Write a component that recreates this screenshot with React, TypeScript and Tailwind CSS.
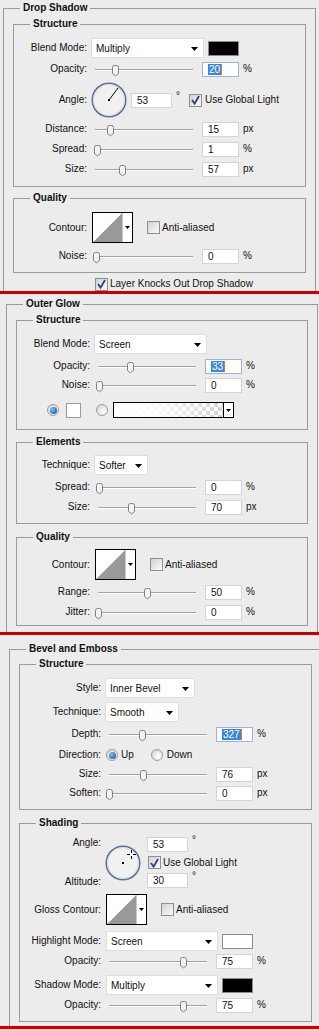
import React from 'react';

// Photoshop "Layer Style" panels: Drop Shadow / Outer Glow / Bevel and Emboss

function Arrow({ small }: { small?: boolean }) {
  return small ? (
    <svg width="5" height="3" viewBox="0 0 5 3" className="shrink-0">
      <path d="M0 0H5L2.5 3Z" fill="#000" />
    </svg>
  ) : (
    <svg width="7" height="4" viewBox="0 0 7 4" className="shrink-0">
      <path d="M0 0H7L3.5 4Z" fill="#000" />
    </svg>
  );
}

function Group({ title, className = '', children }: { title: string; className?: string; children: React.ReactNode }) {
  return (
    <fieldset className={`border border-[#9a9a9a] ${className}`}>
      <legend className="ml-[16px] px-[3px] text-[10px] leading-[12px] font-bold text-[#111]">{title}</legend>
      {children}
    </fieldset>
  );
}

function Slider({ at }: { at: number }) {
  // at = thumb offset from the start of the track
  return (
    <div className="relative h-[16px] w-[106px] shrink-0">
      <div className="absolute left-[4px] right-[4px] top-[8px] h-[2px] border-t border-[#a3a3a3] bg-white" />
      <svg width="9" height="13" viewBox="0 0 9 13" className="absolute top-[3px]" style={{ left: at }}>
        <path d="M1.5 3.5Q1.5 1.5 3.5 1.5H5.5Q7.5 1.5 7.5 3.5V9.5L4.5 11.8L1.5 9.5Z" fill="#f2f2f2" stroke="#7f7f7f" />
        <path d="M2.5 3.5V9" stroke="#fff" />
      </svg>
    </div>
  );
}

function Field({ value, selected, wide }: { value: string; selected?: boolean; wide?: boolean }) {
  return (
    <div
      className={`${wide ? 'w-[41px]' : 'w-[37px]'} h-[15px] shrink-0 bg-white border ${
        selected ? 'border-[#9fb3d6]' : 'border-[#d4d4d4]'
      } flex items-center pl-[5px] leading-[11px]`}
    >
      {selected ? (
        <>
          <span className="bg-[#3b86e0] text-white px-[1px]">{value}</span>
          <span className="w-[1px] h-[11px] bg-[#e07a2a]" />
        </>
      ) : (
        value
      )}
    </div>
  );
}

function Degree({ value }: { value: string }) {
  return (
    <div className="flex items-start">
      <Field value={value} wide />
      <span className="ml-[4px] -mt-[3px]">°</span>
    </div>
  );
}

function Select({ value, w }: { value: string; w: string }) {
  return (
    <div className={`${w} h-[20px] shrink-0 bg-white border border-[#dedede] flex items-center justify-between pl-[4px] pr-[5px] pt-[2px]`}>
      <span>{value}</span>
      <Arrow />
    </div>
  );
}

function Swatch({ dark }: { dark?: boolean }) {
  return <div className={`ml-[4px] w-[31px] h-[15px] shrink-0 border border-[#8c8c8c] ${dark ? 'bg-black' : 'bg-white'}`} />;
}

function Check({ on }: { on?: boolean }) {
  return (
    <div className="w-[13px] h-[13px] shrink-0 border border-[#8e8f8f] bg-[linear-gradient(135deg,#d2d2d2,#fbfbfb)] flex items-center justify-center">
      {on && (
        <svg width="9" height="10" viewBox="0 0 9 10">
          <path d="M1 5L3.6 8.6L8 1" fill="none" stroke="#2b3f86" strokeWidth="1.8" />
        </svg>
      )}
    </div>
  );
}

function Radio({ on }: { on?: boolean }) {
  return (
    <div className="w-[12px] h-[12px] shrink-0 rounded-full border border-[#9a9a9a] bg-[radial-gradient(circle_at_65%_65%,#ffffff,#cfcfcf)] flex items-center justify-center">
      {on && <div className="w-[7px] h-[7px] rounded-full bg-[radial-gradient(circle_at_35%_35%,#7cc4f5,#0d4486)]" />}
    </div>
  );
}

function Contour() {
  return (
    <div className="w-[41px] h-[31px] shrink-0 border border-black bg-white flex">
      <svg width="29" height="29" viewBox="0 0 29 29" className="block shrink-0">
        <path d="M0 29L29 0V29Z" fill="#999" />
        <path d="M1.5 27.5L27.5 1.5" stroke="#f4f4f4" strokeWidth="0.7" />
      </svg>
      <div className="flex-1 border-l border-[#c8c8c8] flex items-center justify-center">
        <Arrow small />
      </div>
    </div>
  );
}

function Dial({ cursor }: { cursor?: boolean }) {
  return (
    <svg width="36" height="36" viewBox="0 0 36 36" className="shrink-0">
      <circle cx="18" cy="18" r="16.8" fill="#f1f1f1" stroke="#5f7199" strokeWidth="1.5" />
      <circle cx="18" cy="18" r="15.5" fill="none" stroke="#d3d7df" strokeWidth="1" />
      {!cursor && <line x1="18" y1="18" x2="27" y2="6" stroke="#000" strokeWidth="1" />}
      <rect x="17" y="17" width="2" height="2" fill="#000" />
      {cursor && (
        <g stroke="#000" strokeWidth="1">
          <path d="M26.5 5V8M26.5 11V14M22 9.5H25M28 9.5H31" />
        </g>
      )}
    </svg>
  );
}

function Row({ label, lw, h = 'h-[16px]', mt, children }: { label?: string; lw: string; h?: string; mt: string; children: React.ReactNode }) {
  return (
    <div className={`flex items-center ${h} ${mt}`}>
      <div className={`${lw} shrink-0 text-right whitespace-nowrap`}>{label}</div>
      <div className="ml-[4px] flex items-center">{children}</div>
    </div>
  );
}

function SliderRow({ label, lw, mt, at, value, unit, selected }: { label: string; lw: string; mt: string; at: number; value: string; unit: string; selected?: boolean }) {
  return (
    <Row label={label} lw={lw} mt={mt}>
      <Slider at={at} />
      <div className="ml-[5px]">
        <Field value={value} selected={selected} />
      </div>
      <span className="ml-[4px]">{unit}</span>
    </Row>
  );
}

function AntiAliased() {
  return (
    <div className="ml-[14px] flex items-center">
      <Check />
      <span className="ml-[2px]">Anti-aliased</span>
    </div>
  );
}

function DropShadow() {
  const lw = 'w-[73px]';
  return (
    <div className="pl-[3px] pt-[2px]">
      <Group title="Drop Shadow" className="w-[313px] border-b-0">
        <Group title="Structure" className="mx-[9px] mt-[4px] pb-[9px]">
          <Row label="Blend Mode:" lw={lw} h="h-[20px]" mt="mt-[8px]">
            <Select value="Multiply" w="w-[113px]" />
            <Swatch dark />
          </Row>
          <SliderRow label="Opacity:" lw={lw} mt="mt-[3px]" at={20} value="20" unit="%" selected />
          <Row label="Angle:" lw={lw} h="h-[36px]" mt="mt-[5px]">
            <Dial />
            <div className="ml-[4px]">
              <Degree value="53" />
            </div>
            <div className="ml-[9px] flex items-center">
              <Check on />
              <span className="ml-[3px]">Use Global Light</span>
            </div>
          </Row>
          <SliderRow label="Distance:" lw={lw} mt="mt-[3px]" at={15} value="15" unit="px" />
          <SliderRow label="Spread:" lw={lw} mt="mt-[4px]" at={2} value="1" unit="%" />
          <SliderRow label="Size:" lw={lw} mt="mt-[4px]" at={27} value="57" unit="px" />
        </Group>
        <Group title="Quality" className="mx-[9px] mt-[5px] pb-[8px]">
          <Row label="Contour:" lw={lw} h="h-[31px]" mt="mt-[8px]">
            <div className="ml-[1px]">
              <Contour />
            </div>
            <AntiAliased />
          </Row>
          <SliderRow label="Noise:" lw={lw} mt="mt-[5px]" at={1} value="0" unit="%" />
        </Group>
        <div className="flex items-center h-[14px] mt-[4px] ml-[9px]">
          <div className={`${lw} shrink-0`} />
          <div className="ml-[9px]">
            <Check on />
          </div>
          <span className="ml-[2px]">Layer Knocks Out Drop Shadow</span>
        </div>
      </Group>
    </div>
  );
}

function OuterGlow() {
  const lw = 'w-[73px]';
  return (
    <div className="pl-[6px] pt-[4px]">
      <Group title="Outer Glow" className="w-[312px] border-b-0 pb-[6px]">
        <Group title="Structure" className="mx-[9px] mt-[4px] pb-[11px]">
          <Row label="Blend Mode:" lw={lw} h="h-[20px]" mt="mt-[8px]">
            <Select value="Screen" w="w-[113px]" />
          </Row>
          <SliderRow label="Opacity:" lw={lw} mt="mt-[4px]" at={32} value="33" unit="%" selected />
          <SliderRow label="Noise:" lw={lw} mt="mt-[3px]" at={1} value="0" unit="%" />
          <div className="flex items-center h-[16px] mt-[9px] pl-[30px]">
            <Radio on />
            <div className="ml-[7px] w-[15px] h-[15px] bg-white border border-[#9a9a9a]" />
            <div className="ml-[15px]">
              <Radio />
            </div>
            <div className="ml-[5px] w-[121px] h-[16px] border border-black flex">
              <div className="flex-1 bg-[repeating-conic-gradient(#d2d2d2_0_25%,#ffffff_0_50%)] bg-[length:8px_8px]">
                <div className="h-full w-full bg-[linear-gradient(to_right,#ffffff_5%,rgba(255,255,255,0.85)_40%,rgba(255,255,255,0))]" />
              </div>
              <div className="w-[10px] bg-white border-l border-black flex items-center justify-center">
                <Arrow small />
              </div>
            </div>
          </div>
        </Group>
        <Group title="Elements" className="mx-[9px] mt-[6px] pb-[8px]">
          <Row label="Technique:" lw={lw} h="h-[20px]" mt="mt-[7px]">
            <Select value="Softer" w="w-[54px]" />
          </Row>
          <SliderRow label="Spread:" lw={lw} mt="mt-[4px]" at={1} value="0" unit="%" />
          <SliderRow label="Size:" lw={lw} mt="mt-[4px]" at={33} value="70" unit="px" />
        </Group>
        <Group title="Quality" className="mx-[9px] mt-[7px] pb-[5px]">
          <Row label="Contour:" lw={lw} h="h-[31px]" mt="mt-[6px]">
            <div className="ml-[1px]">
              <Contour />
            </div>
            <AntiAliased />
          </Row>
          <SliderRow label="Range:" lw={lw} mt="mt-[4px]" at={49} value="50" unit="%" />
          <SliderRow label="Jitter:" lw={lw} mt="mt-[4px]" at={0} value="0" unit="%" />
        </Group>
      </Group>
    </div>
  );
}

function BevelEmboss() {
  const lw = 'w-[81px]';
  return (
    <div className="pl-[9px] pt-[8px]">
      <Group title="Bevel and Emboss" className="w-[313px] border-b-0 pb-[4px]">
        <Group title="Structure" className="mx-[9px] mt-[3px] pb-[8px]">
          <Row label="Style:" lw={lw} h="h-[20px]" mt="mt-[8px]">
            <Select value="Inner Bevel" w="w-[90px]" />
          </Row>
          <Row label="Technique:" lw={lw} h="h-[20px]" mt="mt-[4px]">
            <Select value="Smooth" w="w-[74px]" />
          </Row>
          <SliderRow label="Depth:" lw={lw} mt="mt-[4px]" at={33} value="327" unit="%" selected />
          <Row label="Direction:" lw={lw} mt="mt-[5px]">
            <div className="ml-[1px]">
              <Radio on />
            </div>
            <span className="ml-[3px]">Up</span>
            <div className="ml-[17px]">
              <Radio />
            </div>
            <span className="ml-[4px]">Down</span>
          </Row>
          <SliderRow label="Size:" lw={lw} mt="mt-[3px]" at={34} value="76" unit="px" />
          <SliderRow label="Soften:" lw={lw} mt="mt-[3px]" at={0} value="0" unit="px" />
        </Group>
        <Group title="Shading" className="mx-[9px] mt-[7px] pb-[8px]">
          <div className="flex h-[51px] mt-[8px]">
            <div className={`${lw} shrink-0 flex flex-col justify-between items-end`}>
              <span>Angle:</span>
              <span>Altitude:</span>
            </div>
            <div className="ml-[4px] self-center">
              <Dial cursor />
            </div>
            <div className="ml-[6px] flex flex-col justify-between">
              <Degree value="53" />
              <div className="flex items-center ml-[1px]">
                <Check on />
                <span className="ml-[2px]">Use Global Light</span>
              </div>
              <Degree value="30" />
            </div>
          </div>
          <Row label="Gloss Contour:" lw={lw} h="h-[31px]" mt="mt-[6px]">
            <div className="ml-[1px]">
              <Contour />
            </div>
            <AntiAliased />
          </Row>
          <Row label="Highlight Mode:" lw={lw} h="h-[20px]" mt="mt-[6px]">
            <div className="ml-[1px]">
              <Select value="Screen" w="w-[112px]" />
            </div>
            <Swatch />
          </Row>
          <SliderRow label="Opacity:" lw={lw} mt="mt-[2px]" at={74} value="75" unit="%" />
          <Row label="Shadow Mode:" lw={lw} h="h-[20px]" mt="mt-[6px]">
            <div className="ml-[1px]">
              <Select value="Multiply" w="w-[112px]" />
            </div>
            <Swatch dark />
          </Row>
          <SliderRow label="Opacity:" lw={lw} mt="mt-[2px]" at={74} value="75" unit="%" />
        </Group>
      </Group>
    </div>
  );
}

export default function App() {
  return (
    <div className="w-[319px] h-[1029px] overflow-hidden bg-[#ececec] text-[10px] leading-[12px] text-[#111] font-['Liberation_Sans',Arial,sans-serif]">
      <DropShadow />
      <div className="h-[3px] bg-[#c80000]" />
      <OuterGlow />
      <div className="h-[3px] bg-[#c80000]" />
      <BevelEmboss />
      <div className="h-[3px] bg-[#c80000]" />
    </div>
  );
}
